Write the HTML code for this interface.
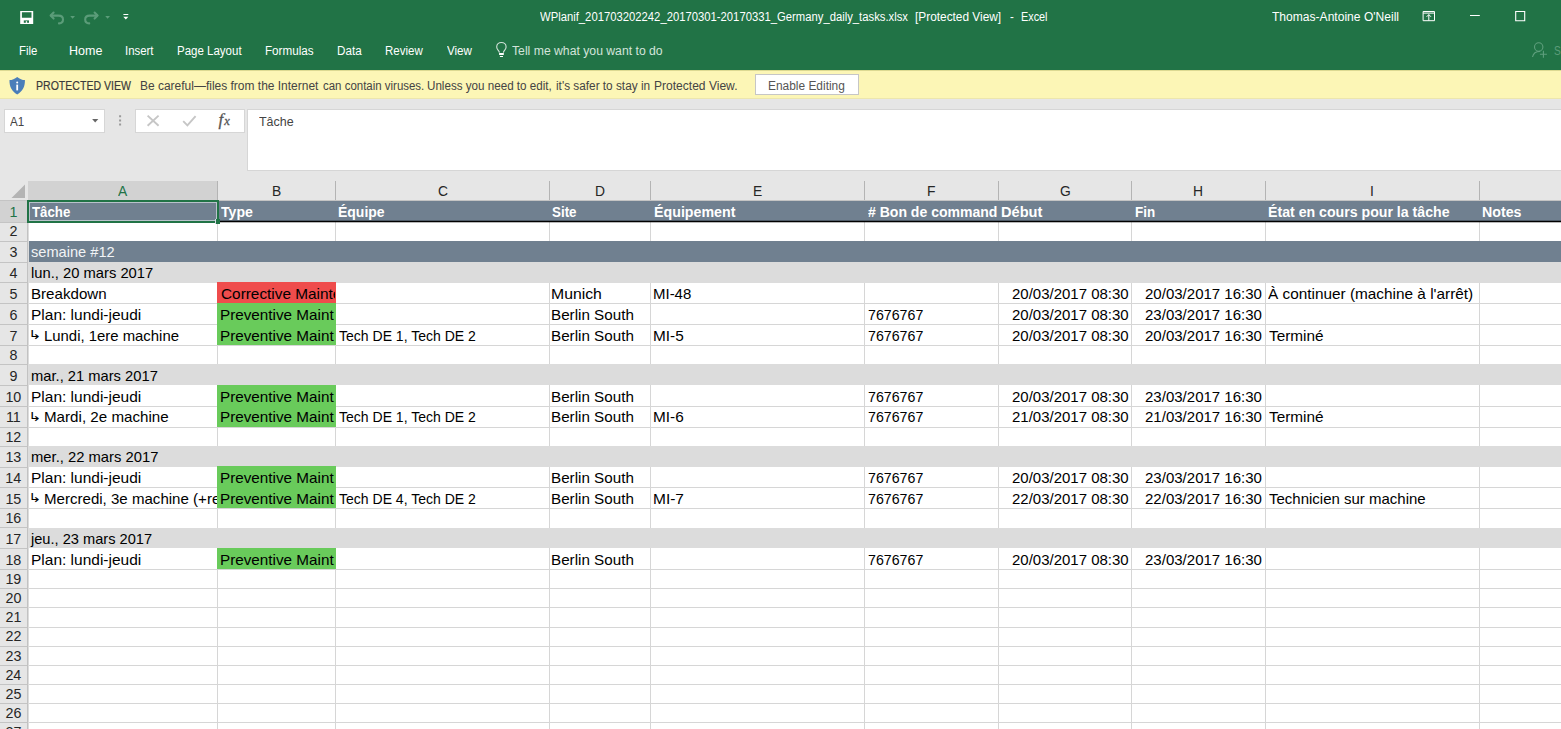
<!DOCTYPE html>
<html lang="fr"><head><meta charset="utf-8"><title>WPlanif - Excel</title>
<style>
html,body{margin:0;padding:0;}
body{width:1561px;height:729px;overflow:hidden;background:#fff;position:relative;font-family:"Liberation Sans",sans-serif;}
#app{position:absolute;left:0;top:0;width:1561px;height:729px;overflow:hidden;}
#app div,#app span,#app svg{position:absolute;}
#app span{white-space:pre;line-height:1;transform-origin:0 0;}
</style></head><body><div id="app">
<div style="left:0.00px;top:0.00px;width:1561.00px;height:70.00px;background:#217346;"></div>
<div style="left:0.00px;top:70.00px;width:1561.00px;height:28.00px;background:#fcf6b6;"></div>
<div style="left:0.00px;top:70.00px;width:1561.00px;height:1.00px;background:#dcd992;"></div>
<div style="left:0.00px;top:98.00px;width:1561.00px;height:1.00px;background:#ece6ae;"></div>
<div style="left:0.00px;top:99.00px;width:1561.00px;height:83.00px;background:#e6e6e6;"></div>
<div style="left:4.00px;top:109.00px;width:101.00px;height:24.00px;background:#fff;border:1px solid #d6d6d6;box-sizing:border-box;"></div>
<div style="left:135.00px;top:109.00px;width:110.00px;height:24.00px;background:#fff;border:1px solid #d6d6d6;box-sizing:border-box;"></div>
<div style="left:247.00px;top:109.00px;width:1320.00px;height:62.00px;background:#fff;border:1px solid #d6d6d6;box-sizing:border-box;"></div>
<div style="left:755.00px;top:74.00px;width:104.00px;height:21.00px;background:#fff;border:1px solid #c6c6c6;box-sizing:border-box;"></div>
<div style="left:0.00px;top:181.20px;width:1561.00px;height:20.00px;background:#e6e6e6;"></div>
<div style="left:27.50px;top:181.20px;width:190.50px;height:19.40px;background:#d2d2d2;"></div>
<div style="left:0.00px;top:201.00px;width:27.50px;height:540.00px;background:#e6e6e6;"></div>
<div style="left:0.00px;top:200.90px;width:27.00px;height:20.84px;background:#d2d2d2;"></div>
<div style="left:27.50px;top:201.00px;width:1533.50px;height:540.00px;background:#fff;"></div>
<div style="left:27.50px;top:200.90px;width:1533.50px;height:20.84px;background:#708090;"></div>
<div style="left:27.50px;top:240.89px;width:1533.50px;height:20.84px;background:#708090;"></div>
<div style="left:27.50px;top:261.73px;width:1533.50px;height:20.84px;background:#dcdcdc;"></div>
<div style="left:27.50px;top:364.24px;width:1533.50px;height:20.84px;background:#dcdcdc;"></div>
<div style="left:27.50px;top:445.91px;width:1533.50px;height:20.84px;background:#dcdcdc;"></div>
<div style="left:27.50px;top:527.58px;width:1533.50px;height:20.84px;background:#dcdcdc;"></div>
<div style="left:0.00px;top:222.00px;width:27.50px;height:1.00px;background:#c4c4c4;"></div>
<div style="left:0.00px;top:241.00px;width:27.50px;height:1.00px;background:#c4c4c4;"></div>
<div style="left:0.00px;top:262.00px;width:27.50px;height:1.00px;background:#c4c4c4;"></div>
<div style="left:0.00px;top:282.00px;width:27.50px;height:1.00px;background:#c4c4c4;"></div>
<div style="left:0.00px;top:303.00px;width:27.50px;height:1.00px;background:#c4c4c4;"></div>
<div style="left:27.50px;top:303.00px;width:1533.50px;height:1.00px;background:#d6d6d6;"></div>
<div style="left:0.00px;top:324.00px;width:27.50px;height:1.00px;background:#c4c4c4;"></div>
<div style="left:27.50px;top:324.00px;width:1533.50px;height:1.00px;background:#d6d6d6;"></div>
<div style="left:0.00px;top:345.00px;width:27.50px;height:1.00px;background:#c4c4c4;"></div>
<div style="left:27.50px;top:345.00px;width:1533.50px;height:1.00px;background:#d6d6d6;"></div>
<div style="left:0.00px;top:364.00px;width:27.50px;height:1.00px;background:#c4c4c4;"></div>
<div style="left:0.00px;top:385.00px;width:27.50px;height:1.00px;background:#c4c4c4;"></div>
<div style="left:0.00px;top:406.00px;width:27.50px;height:1.00px;background:#c4c4c4;"></div>
<div style="left:27.50px;top:406.00px;width:1533.50px;height:1.00px;background:#d6d6d6;"></div>
<div style="left:0.00px;top:427.00px;width:27.50px;height:1.00px;background:#c4c4c4;"></div>
<div style="left:27.50px;top:427.00px;width:1533.50px;height:1.00px;background:#d6d6d6;"></div>
<div style="left:0.00px;top:446.00px;width:27.50px;height:1.00px;background:#c4c4c4;"></div>
<div style="left:0.00px;top:467.00px;width:27.50px;height:1.00px;background:#c4c4c4;"></div>
<div style="left:0.00px;top:487.00px;width:27.50px;height:1.00px;background:#c4c4c4;"></div>
<div style="left:27.50px;top:487.00px;width:1533.50px;height:1.00px;background:#d6d6d6;"></div>
<div style="left:0.00px;top:508.00px;width:27.50px;height:1.00px;background:#c4c4c4;"></div>
<div style="left:27.50px;top:508.00px;width:1533.50px;height:1.00px;background:#d6d6d6;"></div>
<div style="left:0.00px;top:527.00px;width:27.50px;height:1.00px;background:#c4c4c4;"></div>
<div style="left:0.00px;top:548.00px;width:27.50px;height:1.00px;background:#c4c4c4;"></div>
<div style="left:0.00px;top:569.00px;width:27.50px;height:1.00px;background:#c4c4c4;"></div>
<div style="left:27.50px;top:569.00px;width:1533.50px;height:1.00px;background:#d6d6d6;"></div>
<div style="left:0.00px;top:588.00px;width:27.50px;height:1.00px;background:#c4c4c4;"></div>
<div style="left:27.50px;top:588.00px;width:1533.50px;height:1.00px;background:#d6d6d6;"></div>
<div style="left:0.00px;top:607.00px;width:27.50px;height:1.00px;background:#c4c4c4;"></div>
<div style="left:27.50px;top:607.00px;width:1533.50px;height:1.00px;background:#d6d6d6;"></div>
<div style="left:0.00px;top:627.00px;width:27.50px;height:1.00px;background:#c4c4c4;"></div>
<div style="left:27.50px;top:627.00px;width:1533.50px;height:1.00px;background:#d6d6d6;"></div>
<div style="left:0.00px;top:646.00px;width:27.50px;height:1.00px;background:#c4c4c4;"></div>
<div style="left:27.50px;top:646.00px;width:1533.50px;height:1.00px;background:#d6d6d6;"></div>
<div style="left:0.00px;top:665.00px;width:27.50px;height:1.00px;background:#c4c4c4;"></div>
<div style="left:27.50px;top:665.00px;width:1533.50px;height:1.00px;background:#d6d6d6;"></div>
<div style="left:0.00px;top:684.00px;width:27.50px;height:1.00px;background:#c4c4c4;"></div>
<div style="left:27.50px;top:684.00px;width:1533.50px;height:1.00px;background:#d6d6d6;"></div>
<div style="left:0.00px;top:703.00px;width:27.50px;height:1.00px;background:#c4c4c4;"></div>
<div style="left:27.50px;top:703.00px;width:1533.50px;height:1.00px;background:#d6d6d6;"></div>
<div style="left:0.00px;top:722.00px;width:27.50px;height:1.00px;background:#c4c4c4;"></div>
<div style="left:27.50px;top:722.00px;width:1533.50px;height:1.00px;background:#d6d6d6;"></div>
<div style="left:0.00px;top:741.00px;width:27.50px;height:1.00px;background:#c4c4c4;"></div>
<div style="left:27.50px;top:741.00px;width:1533.50px;height:1.00px;background:#d6d6d6;"></div>
<div style="left:217.00px;top:221.74px;width:1.00px;height:19.15px;background:#d6d6d6;"></div>
<div style="left:217.00px;top:282.57px;width:1.00px;height:20.84px;background:#d6d6d6;"></div>
<div style="left:217.00px;top:303.41px;width:1.00px;height:20.84px;background:#d6d6d6;"></div>
<div style="left:217.00px;top:324.25px;width:1.00px;height:20.84px;background:#d6d6d6;"></div>
<div style="left:217.00px;top:345.09px;width:1.00px;height:19.15px;background:#d6d6d6;"></div>
<div style="left:217.00px;top:385.08px;width:1.00px;height:20.84px;background:#d6d6d6;"></div>
<div style="left:217.00px;top:405.92px;width:1.00px;height:20.84px;background:#d6d6d6;"></div>
<div style="left:217.00px;top:426.76px;width:1.00px;height:19.15px;background:#d6d6d6;"></div>
<div style="left:217.00px;top:466.75px;width:1.00px;height:20.84px;background:#d6d6d6;"></div>
<div style="left:217.00px;top:487.59px;width:1.00px;height:20.84px;background:#d6d6d6;"></div>
<div style="left:217.00px;top:508.43px;width:1.00px;height:19.15px;background:#d6d6d6;"></div>
<div style="left:217.00px;top:548.42px;width:1.00px;height:20.84px;background:#d6d6d6;"></div>
<div style="left:217.00px;top:569.26px;width:1.00px;height:19.15px;background:#d6d6d6;"></div>
<div style="left:217.00px;top:588.41px;width:1.00px;height:19.15px;background:#d6d6d6;"></div>
<div style="left:217.00px;top:607.56px;width:1.00px;height:19.15px;background:#d6d6d6;"></div>
<div style="left:217.00px;top:626.71px;width:1.00px;height:19.15px;background:#d6d6d6;"></div>
<div style="left:217.00px;top:645.86px;width:1.00px;height:19.15px;background:#d6d6d6;"></div>
<div style="left:217.00px;top:665.01px;width:1.00px;height:19.15px;background:#d6d6d6;"></div>
<div style="left:217.00px;top:684.16px;width:1.00px;height:19.15px;background:#d6d6d6;"></div>
<div style="left:217.00px;top:703.31px;width:1.00px;height:19.15px;background:#d6d6d6;"></div>
<div style="left:217.00px;top:722.46px;width:1.00px;height:19.15px;background:#d6d6d6;"></div>
<div style="left:335.00px;top:221.74px;width:1.00px;height:19.15px;background:#d6d6d6;"></div>
<div style="left:335.00px;top:282.57px;width:1.00px;height:20.84px;background:#d6d6d6;"></div>
<div style="left:335.00px;top:303.41px;width:1.00px;height:20.84px;background:#d6d6d6;"></div>
<div style="left:335.00px;top:324.25px;width:1.00px;height:20.84px;background:#d6d6d6;"></div>
<div style="left:335.00px;top:345.09px;width:1.00px;height:19.15px;background:#d6d6d6;"></div>
<div style="left:335.00px;top:385.08px;width:1.00px;height:20.84px;background:#d6d6d6;"></div>
<div style="left:335.00px;top:405.92px;width:1.00px;height:20.84px;background:#d6d6d6;"></div>
<div style="left:335.00px;top:426.76px;width:1.00px;height:19.15px;background:#d6d6d6;"></div>
<div style="left:335.00px;top:466.75px;width:1.00px;height:20.84px;background:#d6d6d6;"></div>
<div style="left:335.00px;top:487.59px;width:1.00px;height:20.84px;background:#d6d6d6;"></div>
<div style="left:335.00px;top:508.43px;width:1.00px;height:19.15px;background:#d6d6d6;"></div>
<div style="left:335.00px;top:548.42px;width:1.00px;height:20.84px;background:#d6d6d6;"></div>
<div style="left:335.00px;top:569.26px;width:1.00px;height:19.15px;background:#d6d6d6;"></div>
<div style="left:335.00px;top:588.41px;width:1.00px;height:19.15px;background:#d6d6d6;"></div>
<div style="left:335.00px;top:607.56px;width:1.00px;height:19.15px;background:#d6d6d6;"></div>
<div style="left:335.00px;top:626.71px;width:1.00px;height:19.15px;background:#d6d6d6;"></div>
<div style="left:335.00px;top:645.86px;width:1.00px;height:19.15px;background:#d6d6d6;"></div>
<div style="left:335.00px;top:665.01px;width:1.00px;height:19.15px;background:#d6d6d6;"></div>
<div style="left:335.00px;top:684.16px;width:1.00px;height:19.15px;background:#d6d6d6;"></div>
<div style="left:335.00px;top:703.31px;width:1.00px;height:19.15px;background:#d6d6d6;"></div>
<div style="left:335.00px;top:722.46px;width:1.00px;height:19.15px;background:#d6d6d6;"></div>
<div style="left:549.00px;top:221.74px;width:1.00px;height:19.15px;background:#d6d6d6;"></div>
<div style="left:549.00px;top:282.57px;width:1.00px;height:20.84px;background:#d6d6d6;"></div>
<div style="left:549.00px;top:303.41px;width:1.00px;height:20.84px;background:#d6d6d6;"></div>
<div style="left:549.00px;top:324.25px;width:1.00px;height:20.84px;background:#d6d6d6;"></div>
<div style="left:549.00px;top:345.09px;width:1.00px;height:19.15px;background:#d6d6d6;"></div>
<div style="left:549.00px;top:385.08px;width:1.00px;height:20.84px;background:#d6d6d6;"></div>
<div style="left:549.00px;top:405.92px;width:1.00px;height:20.84px;background:#d6d6d6;"></div>
<div style="left:549.00px;top:426.76px;width:1.00px;height:19.15px;background:#d6d6d6;"></div>
<div style="left:549.00px;top:466.75px;width:1.00px;height:20.84px;background:#d6d6d6;"></div>
<div style="left:549.00px;top:487.59px;width:1.00px;height:20.84px;background:#d6d6d6;"></div>
<div style="left:549.00px;top:508.43px;width:1.00px;height:19.15px;background:#d6d6d6;"></div>
<div style="left:549.00px;top:548.42px;width:1.00px;height:20.84px;background:#d6d6d6;"></div>
<div style="left:549.00px;top:569.26px;width:1.00px;height:19.15px;background:#d6d6d6;"></div>
<div style="left:549.00px;top:588.41px;width:1.00px;height:19.15px;background:#d6d6d6;"></div>
<div style="left:549.00px;top:607.56px;width:1.00px;height:19.15px;background:#d6d6d6;"></div>
<div style="left:549.00px;top:626.71px;width:1.00px;height:19.15px;background:#d6d6d6;"></div>
<div style="left:549.00px;top:645.86px;width:1.00px;height:19.15px;background:#d6d6d6;"></div>
<div style="left:549.00px;top:665.01px;width:1.00px;height:19.15px;background:#d6d6d6;"></div>
<div style="left:549.00px;top:684.16px;width:1.00px;height:19.15px;background:#d6d6d6;"></div>
<div style="left:549.00px;top:703.31px;width:1.00px;height:19.15px;background:#d6d6d6;"></div>
<div style="left:549.00px;top:722.46px;width:1.00px;height:19.15px;background:#d6d6d6;"></div>
<div style="left:650.00px;top:221.74px;width:1.00px;height:19.15px;background:#d6d6d6;"></div>
<div style="left:650.00px;top:282.57px;width:1.00px;height:20.84px;background:#d6d6d6;"></div>
<div style="left:650.00px;top:303.41px;width:1.00px;height:20.84px;background:#d6d6d6;"></div>
<div style="left:650.00px;top:324.25px;width:1.00px;height:20.84px;background:#d6d6d6;"></div>
<div style="left:650.00px;top:345.09px;width:1.00px;height:19.15px;background:#d6d6d6;"></div>
<div style="left:650.00px;top:385.08px;width:1.00px;height:20.84px;background:#d6d6d6;"></div>
<div style="left:650.00px;top:405.92px;width:1.00px;height:20.84px;background:#d6d6d6;"></div>
<div style="left:650.00px;top:426.76px;width:1.00px;height:19.15px;background:#d6d6d6;"></div>
<div style="left:650.00px;top:466.75px;width:1.00px;height:20.84px;background:#d6d6d6;"></div>
<div style="left:650.00px;top:487.59px;width:1.00px;height:20.84px;background:#d6d6d6;"></div>
<div style="left:650.00px;top:508.43px;width:1.00px;height:19.15px;background:#d6d6d6;"></div>
<div style="left:650.00px;top:548.42px;width:1.00px;height:20.84px;background:#d6d6d6;"></div>
<div style="left:650.00px;top:569.26px;width:1.00px;height:19.15px;background:#d6d6d6;"></div>
<div style="left:650.00px;top:588.41px;width:1.00px;height:19.15px;background:#d6d6d6;"></div>
<div style="left:650.00px;top:607.56px;width:1.00px;height:19.15px;background:#d6d6d6;"></div>
<div style="left:650.00px;top:626.71px;width:1.00px;height:19.15px;background:#d6d6d6;"></div>
<div style="left:650.00px;top:645.86px;width:1.00px;height:19.15px;background:#d6d6d6;"></div>
<div style="left:650.00px;top:665.01px;width:1.00px;height:19.15px;background:#d6d6d6;"></div>
<div style="left:650.00px;top:684.16px;width:1.00px;height:19.15px;background:#d6d6d6;"></div>
<div style="left:650.00px;top:703.31px;width:1.00px;height:19.15px;background:#d6d6d6;"></div>
<div style="left:650.00px;top:722.46px;width:1.00px;height:19.15px;background:#d6d6d6;"></div>
<div style="left:864.00px;top:221.74px;width:1.00px;height:19.15px;background:#d6d6d6;"></div>
<div style="left:864.00px;top:282.57px;width:1.00px;height:20.84px;background:#d6d6d6;"></div>
<div style="left:864.00px;top:303.41px;width:1.00px;height:20.84px;background:#d6d6d6;"></div>
<div style="left:864.00px;top:324.25px;width:1.00px;height:20.84px;background:#d6d6d6;"></div>
<div style="left:864.00px;top:345.09px;width:1.00px;height:19.15px;background:#d6d6d6;"></div>
<div style="left:864.00px;top:385.08px;width:1.00px;height:20.84px;background:#d6d6d6;"></div>
<div style="left:864.00px;top:405.92px;width:1.00px;height:20.84px;background:#d6d6d6;"></div>
<div style="left:864.00px;top:426.76px;width:1.00px;height:19.15px;background:#d6d6d6;"></div>
<div style="left:864.00px;top:466.75px;width:1.00px;height:20.84px;background:#d6d6d6;"></div>
<div style="left:864.00px;top:487.59px;width:1.00px;height:20.84px;background:#d6d6d6;"></div>
<div style="left:864.00px;top:508.43px;width:1.00px;height:19.15px;background:#d6d6d6;"></div>
<div style="left:864.00px;top:548.42px;width:1.00px;height:20.84px;background:#d6d6d6;"></div>
<div style="left:864.00px;top:569.26px;width:1.00px;height:19.15px;background:#d6d6d6;"></div>
<div style="left:864.00px;top:588.41px;width:1.00px;height:19.15px;background:#d6d6d6;"></div>
<div style="left:864.00px;top:607.56px;width:1.00px;height:19.15px;background:#d6d6d6;"></div>
<div style="left:864.00px;top:626.71px;width:1.00px;height:19.15px;background:#d6d6d6;"></div>
<div style="left:864.00px;top:645.86px;width:1.00px;height:19.15px;background:#d6d6d6;"></div>
<div style="left:864.00px;top:665.01px;width:1.00px;height:19.15px;background:#d6d6d6;"></div>
<div style="left:864.00px;top:684.16px;width:1.00px;height:19.15px;background:#d6d6d6;"></div>
<div style="left:864.00px;top:703.31px;width:1.00px;height:19.15px;background:#d6d6d6;"></div>
<div style="left:864.00px;top:722.46px;width:1.00px;height:19.15px;background:#d6d6d6;"></div>
<div style="left:998.00px;top:221.74px;width:1.00px;height:19.15px;background:#d6d6d6;"></div>
<div style="left:998.00px;top:282.57px;width:1.00px;height:20.84px;background:#d6d6d6;"></div>
<div style="left:998.00px;top:303.41px;width:1.00px;height:20.84px;background:#d6d6d6;"></div>
<div style="left:998.00px;top:324.25px;width:1.00px;height:20.84px;background:#d6d6d6;"></div>
<div style="left:998.00px;top:345.09px;width:1.00px;height:19.15px;background:#d6d6d6;"></div>
<div style="left:998.00px;top:385.08px;width:1.00px;height:20.84px;background:#d6d6d6;"></div>
<div style="left:998.00px;top:405.92px;width:1.00px;height:20.84px;background:#d6d6d6;"></div>
<div style="left:998.00px;top:426.76px;width:1.00px;height:19.15px;background:#d6d6d6;"></div>
<div style="left:998.00px;top:466.75px;width:1.00px;height:20.84px;background:#d6d6d6;"></div>
<div style="left:998.00px;top:487.59px;width:1.00px;height:20.84px;background:#d6d6d6;"></div>
<div style="left:998.00px;top:508.43px;width:1.00px;height:19.15px;background:#d6d6d6;"></div>
<div style="left:998.00px;top:548.42px;width:1.00px;height:20.84px;background:#d6d6d6;"></div>
<div style="left:998.00px;top:569.26px;width:1.00px;height:19.15px;background:#d6d6d6;"></div>
<div style="left:998.00px;top:588.41px;width:1.00px;height:19.15px;background:#d6d6d6;"></div>
<div style="left:998.00px;top:607.56px;width:1.00px;height:19.15px;background:#d6d6d6;"></div>
<div style="left:998.00px;top:626.71px;width:1.00px;height:19.15px;background:#d6d6d6;"></div>
<div style="left:998.00px;top:645.86px;width:1.00px;height:19.15px;background:#d6d6d6;"></div>
<div style="left:998.00px;top:665.01px;width:1.00px;height:19.15px;background:#d6d6d6;"></div>
<div style="left:998.00px;top:684.16px;width:1.00px;height:19.15px;background:#d6d6d6;"></div>
<div style="left:998.00px;top:703.31px;width:1.00px;height:19.15px;background:#d6d6d6;"></div>
<div style="left:998.00px;top:722.46px;width:1.00px;height:19.15px;background:#d6d6d6;"></div>
<div style="left:1131.00px;top:221.74px;width:1.00px;height:19.15px;background:#d6d6d6;"></div>
<div style="left:1131.00px;top:282.57px;width:1.00px;height:20.84px;background:#d6d6d6;"></div>
<div style="left:1131.00px;top:303.41px;width:1.00px;height:20.84px;background:#d6d6d6;"></div>
<div style="left:1131.00px;top:324.25px;width:1.00px;height:20.84px;background:#d6d6d6;"></div>
<div style="left:1131.00px;top:345.09px;width:1.00px;height:19.15px;background:#d6d6d6;"></div>
<div style="left:1131.00px;top:385.08px;width:1.00px;height:20.84px;background:#d6d6d6;"></div>
<div style="left:1131.00px;top:405.92px;width:1.00px;height:20.84px;background:#d6d6d6;"></div>
<div style="left:1131.00px;top:426.76px;width:1.00px;height:19.15px;background:#d6d6d6;"></div>
<div style="left:1131.00px;top:466.75px;width:1.00px;height:20.84px;background:#d6d6d6;"></div>
<div style="left:1131.00px;top:487.59px;width:1.00px;height:20.84px;background:#d6d6d6;"></div>
<div style="left:1131.00px;top:508.43px;width:1.00px;height:19.15px;background:#d6d6d6;"></div>
<div style="left:1131.00px;top:548.42px;width:1.00px;height:20.84px;background:#d6d6d6;"></div>
<div style="left:1131.00px;top:569.26px;width:1.00px;height:19.15px;background:#d6d6d6;"></div>
<div style="left:1131.00px;top:588.41px;width:1.00px;height:19.15px;background:#d6d6d6;"></div>
<div style="left:1131.00px;top:607.56px;width:1.00px;height:19.15px;background:#d6d6d6;"></div>
<div style="left:1131.00px;top:626.71px;width:1.00px;height:19.15px;background:#d6d6d6;"></div>
<div style="left:1131.00px;top:645.86px;width:1.00px;height:19.15px;background:#d6d6d6;"></div>
<div style="left:1131.00px;top:665.01px;width:1.00px;height:19.15px;background:#d6d6d6;"></div>
<div style="left:1131.00px;top:684.16px;width:1.00px;height:19.15px;background:#d6d6d6;"></div>
<div style="left:1131.00px;top:703.31px;width:1.00px;height:19.15px;background:#d6d6d6;"></div>
<div style="left:1131.00px;top:722.46px;width:1.00px;height:19.15px;background:#d6d6d6;"></div>
<div style="left:1265.00px;top:221.74px;width:1.00px;height:19.15px;background:#d6d6d6;"></div>
<div style="left:1265.00px;top:282.57px;width:1.00px;height:20.84px;background:#d6d6d6;"></div>
<div style="left:1265.00px;top:303.41px;width:1.00px;height:20.84px;background:#d6d6d6;"></div>
<div style="left:1265.00px;top:324.25px;width:1.00px;height:20.84px;background:#d6d6d6;"></div>
<div style="left:1265.00px;top:345.09px;width:1.00px;height:19.15px;background:#d6d6d6;"></div>
<div style="left:1265.00px;top:385.08px;width:1.00px;height:20.84px;background:#d6d6d6;"></div>
<div style="left:1265.00px;top:405.92px;width:1.00px;height:20.84px;background:#d6d6d6;"></div>
<div style="left:1265.00px;top:426.76px;width:1.00px;height:19.15px;background:#d6d6d6;"></div>
<div style="left:1265.00px;top:466.75px;width:1.00px;height:20.84px;background:#d6d6d6;"></div>
<div style="left:1265.00px;top:487.59px;width:1.00px;height:20.84px;background:#d6d6d6;"></div>
<div style="left:1265.00px;top:508.43px;width:1.00px;height:19.15px;background:#d6d6d6;"></div>
<div style="left:1265.00px;top:548.42px;width:1.00px;height:20.84px;background:#d6d6d6;"></div>
<div style="left:1265.00px;top:569.26px;width:1.00px;height:19.15px;background:#d6d6d6;"></div>
<div style="left:1265.00px;top:588.41px;width:1.00px;height:19.15px;background:#d6d6d6;"></div>
<div style="left:1265.00px;top:607.56px;width:1.00px;height:19.15px;background:#d6d6d6;"></div>
<div style="left:1265.00px;top:626.71px;width:1.00px;height:19.15px;background:#d6d6d6;"></div>
<div style="left:1265.00px;top:645.86px;width:1.00px;height:19.15px;background:#d6d6d6;"></div>
<div style="left:1265.00px;top:665.01px;width:1.00px;height:19.15px;background:#d6d6d6;"></div>
<div style="left:1265.00px;top:684.16px;width:1.00px;height:19.15px;background:#d6d6d6;"></div>
<div style="left:1265.00px;top:703.31px;width:1.00px;height:19.15px;background:#d6d6d6;"></div>
<div style="left:1265.00px;top:722.46px;width:1.00px;height:19.15px;background:#d6d6d6;"></div>
<div style="left:1479.00px;top:221.74px;width:1.00px;height:19.15px;background:#d6d6d6;"></div>
<div style="left:1479.00px;top:282.57px;width:1.00px;height:20.84px;background:#d6d6d6;"></div>
<div style="left:1479.00px;top:303.41px;width:1.00px;height:20.84px;background:#d6d6d6;"></div>
<div style="left:1479.00px;top:324.25px;width:1.00px;height:20.84px;background:#d6d6d6;"></div>
<div style="left:1479.00px;top:345.09px;width:1.00px;height:19.15px;background:#d6d6d6;"></div>
<div style="left:1479.00px;top:385.08px;width:1.00px;height:20.84px;background:#d6d6d6;"></div>
<div style="left:1479.00px;top:405.92px;width:1.00px;height:20.84px;background:#d6d6d6;"></div>
<div style="left:1479.00px;top:426.76px;width:1.00px;height:19.15px;background:#d6d6d6;"></div>
<div style="left:1479.00px;top:466.75px;width:1.00px;height:20.84px;background:#d6d6d6;"></div>
<div style="left:1479.00px;top:487.59px;width:1.00px;height:20.84px;background:#d6d6d6;"></div>
<div style="left:1479.00px;top:508.43px;width:1.00px;height:19.15px;background:#d6d6d6;"></div>
<div style="left:1479.00px;top:548.42px;width:1.00px;height:20.84px;background:#d6d6d6;"></div>
<div style="left:1479.00px;top:569.26px;width:1.00px;height:19.15px;background:#d6d6d6;"></div>
<div style="left:1479.00px;top:588.41px;width:1.00px;height:19.15px;background:#d6d6d6;"></div>
<div style="left:1479.00px;top:607.56px;width:1.00px;height:19.15px;background:#d6d6d6;"></div>
<div style="left:1479.00px;top:626.71px;width:1.00px;height:19.15px;background:#d6d6d6;"></div>
<div style="left:1479.00px;top:645.86px;width:1.00px;height:19.15px;background:#d6d6d6;"></div>
<div style="left:1479.00px;top:665.01px;width:1.00px;height:19.15px;background:#d6d6d6;"></div>
<div style="left:1479.00px;top:684.16px;width:1.00px;height:19.15px;background:#d6d6d6;"></div>
<div style="left:1479.00px;top:703.31px;width:1.00px;height:19.15px;background:#d6d6d6;"></div>
<div style="left:1479.00px;top:722.46px;width:1.00px;height:19.15px;background:#d6d6d6;"></div>
<div style="left:217.00px;top:282.27px;width:119.00px;height:21.14px;background:#ef4c4c;"></div>
<div style="left:217.00px;top:303.11px;width:119.00px;height:21.14px;background:#69cb5b;"></div>
<div style="left:217.00px;top:323.95px;width:119.00px;height:21.14px;background:#69cb5b;"></div>
<div style="left:217.00px;top:384.78px;width:119.00px;height:21.14px;background:#69cb5b;"></div>
<div style="left:217.00px;top:405.62px;width:119.00px;height:21.14px;background:#69cb5b;"></div>
<div style="left:217.00px;top:466.45px;width:119.00px;height:21.14px;background:#69cb5b;"></div>
<div style="left:217.00px;top:487.29px;width:119.00px;height:21.14px;background:#69cb5b;"></div>
<div style="left:217.00px;top:548.12px;width:119.00px;height:21.14px;background:#69cb5b;"></div>
<div style="left:218.00px;top:220.00px;width:1343.00px;height:3.00px;background:rgba(0,0,0,.28);"></div>
<div style="left:218.00px;top:221.00px;width:1343.00px;height:1.00px;background:#000;"></div>
<div style="left:217.00px;top:181.20px;width:1.00px;height:20.00px;background:#b4b4b4;"></div>
<div style="left:335.00px;top:181.20px;width:1.00px;height:20.00px;background:#b4b4b4;"></div>
<div style="left:549.00px;top:181.20px;width:1.00px;height:20.00px;background:#b4b4b4;"></div>
<div style="left:650.00px;top:181.20px;width:1.00px;height:20.00px;background:#b4b4b4;"></div>
<div style="left:864.00px;top:181.20px;width:1.00px;height:20.00px;background:#b4b4b4;"></div>
<div style="left:998.00px;top:181.20px;width:1.00px;height:20.00px;background:#b4b4b4;"></div>
<div style="left:1131.00px;top:181.20px;width:1.00px;height:20.00px;background:#b4b4b4;"></div>
<div style="left:1265.00px;top:181.20px;width:1.00px;height:20.00px;background:#b4b4b4;"></div>
<div style="left:1479.00px;top:181.20px;width:1.00px;height:20.00px;background:#b4b4b4;"></div>
<div style="left:0.00px;top:200.40px;width:1561.00px;height:0.90px;background:#c4c4c4;"></div>
<div style="left:27.00px;top:201.00px;width:1.00px;height:540.00px;background:#c2c2c2;"></div>
<div style="left:28.00px;top:201.00px;width:1.00px;height:540.00px;background:#dcdcdc;"></div>
<svg style="left:11px;top:184px" width="15" height="15" viewBox="0 0 15 15"><path d="M14 0.5V14H0.5Z" fill="#b4b4b4"/></svg>
<div style="left:26.90px;top:200.00px;width:192.10px;height:23.00px;background:transparent;border:2px solid #217346;box-sizing:border-box;box-shadow:inset 0 0 0 1px #b9c2cb;"></div>
<div style="left:215.00px;top:218.60px;width:5.00px;height:5.40px;background:#d5dce3;"></div>
<div style="left:215.60px;top:219.30px;width:4.40px;height:4.70px;background:#217346;"></div>
<div style="left:27.50px;top:199.60px;width:190.50px;height:1.60px;background:#217346;"></div>
<svg style="left:19px;top:10px" width="16" height="16" viewBox="19 10 16 16"><path d="M20.2 11.1h13v12.9h-13z M21.9 12.2v5.5h9.6v-5.5z" fill="#fff" fill-rule="evenodd"/><path d="M23.8 20.4h5.2v2.4h-5.2z" fill="#217346"/><path d="M25.8 21.2h1.3v1.7h-1.3z" fill="#fff"/></svg>
<svg style="left:48px;top:10px" width="66" height="16" viewBox="48 10 66 16"><g fill="none" stroke="#5b9c79" stroke-width="2.1" stroke-linecap="round" stroke-linejoin="round"><path d="M53.6 12.6L50.6 15.6L53.6 18.6"/><path d="M51 15.6H58.5C61.3 15.6 63 17.3 63 19.4C63 21.6 61.3 23.2 59 23.4"/><path d="M94.6 12.6L97.6 15.6L94.6 18.6"/><path d="M97.2 15.6H89.7C86.9 15.6 85.2 17.3 85.2 19.4C85.2 21.6 86.9 23.2 89.2 23.4"/></g><path d="M70.2 16.1h4.8l-2.4 2.7z M105.2 16.1h4.8l-2.4 2.7z" fill="#5b9c79"/></svg>
<svg style="left:122px;top:12px" width="8" height="9" viewBox="122 12 8 9"><path d="M123.4 14h4.9v1h-4.9z M123.3 16.8h5l-2.5 2.6z" fill="#fff"/></svg>
<svg style="left:1420px;top:9px" width="18" height="14" viewBox="1420 9 18 14"><g fill="none" stroke="#fff" stroke-width="1"><path d="M1423.1 11.5h11.4v9.2h-11.4z M1423.1 13.1h11.4 M1428.8 14.6v6"/><path d="M1426.6 16.8l2.2-2.2l2.2 2.2"/></g></svg>
<svg style="left:1468px;top:13px" width="14" height="5" viewBox="1468 13 14 5"><path d="M1470 15.5h9.8" stroke="#fff" stroke-width="1" fill="none"/></svg>
<svg style="left:1513px;top:9px" width="15" height="14" viewBox="1513 9 15 14"><path d="M1515.7 11.5h9v9.2h-9z" stroke="#fff" stroke-width="1.1" fill="none"/></svg>
<svg style="left:1528px;top:40px" width="22" height="20" viewBox="1528 40 22 20"><g fill="none" stroke="#5f9f7d" stroke-width="1.1"><circle cx="1538.7" cy="47" r="4.2"/><path d="M1532.5 57C1533.3 53.2 1536 51.3 1540.3 51.4"/><path d="M1539.9 54.2h7 M1543.4 50.8v7"/></g></svg>
<svg style="left:494px;top:40px" width="16" height="19" viewBox="494 40 16 19"><path d="M499.4 52.6C499.2 50.8 496.7 49.6 496.7 46.9C496.7 44.4 498.8 42.5 501.4 42.5C504 42.5 506.1 44.4 506.1 46.9C506.1 49.6 503.6 50.8 503.4 52.6" fill="none" stroke="#d3e3da" stroke-width="1.1"/><path d="M499.1 53.1h4.7v1.9h-4.7z M499.9 55.9h3.1v1h-3.1z" fill="#fff"/></svg>
<svg style="left:8px;top:75px" width="19" height="21" viewBox="8 75 19 21"><path d="M17.2 76.9C19.6 78.9 22.3 79.9 24.9 80.1C25.2 86.6 22.5 91.6 17.2 94.5C11.9 91.6 9.2 86.6 9.5 80.1C12.1 79.9 14.8 78.9 17.2 76.9Z" fill="#4a7eb9"/><path d="M16.3 84.6h1.8v5.8h-1.8z" fill="#fff"/><circle cx="17.2" cy="82.5" r="1" fill="#fff"/></svg>
<svg style="left:90px;top:117px" width="10" height="7" viewBox="90 117 10 7"><path d="M92.1 119h6.2l-3.1 3.4z" fill="#666"/></svg>
<svg style="left:118px;top:114px" width="5" height="13" viewBox="118 114 5 13"><path d="M119.1 115.3h2v2h-2z M119.1 119.4h2v2h-2z M119.1 123.5h2v2h-2z" fill="#9a9a9a"/></svg>
<svg style="left:145px;top:113px" width="54" height="15" viewBox="145 113 54 15"><g fill="none" stroke="#c6c6c6" stroke-width="1.9"><path d="M147.6 115.6L158.6 125.8 M158.6 115.6L147.6 125.8"/><path d="M183.2 121.2L187.4 125.4L195.6 116.2"/></g></svg>
<span style="left:218.6px;top:111.2px;font-family:'Liberation Serif',serif;font-style:italic;font-size:17px;color:#555;-webkit-text-stroke:0.3px #555;">f</span><span style="left:224.2px;top:115.4px;font-family:'Liberation Serif',serif;font-style:italic;font-size:12.5px;color:#555;-webkit-text-stroke:0.3px #555;">x</span>

<span style="left:539.55px;top:10.59px;font-size:12.3px;color:#fff;transform:scaleX(0.9170);">WPlanif_201703202242_20170301-20170331_Germany_daily_tasks.xlsx</span>
<span style="left:914.83px;top:10.59px;font-size:12.3px;color:#fff;transform:scaleX(0.9641);">[Protected View]</span>
<span style="left:1009.88px;top:10.59px;font-size:12.3px;color:#fff;transform:scaleX(0.9333);">-</span>
<span style="left:1020.57px;top:10.59px;font-size:12.3px;color:#fff;transform:scaleX(0.8814);">Excel</span>
<span style="left:1271.60px;top:10.59px;font-size:12.3px;color:#fff;transform:scaleX(0.9813);">Thomas-Antoine O'Neill</span>
<span style="left:18.92px;top:44.99px;font-size:12.3px;color:#fff;transform:scaleX(0.9260);">File</span>
<span style="left:68.83px;top:44.99px;font-size:12.3px;color:#fff;transform:scaleX(1.0176);">Home</span>
<span style="left:124.82px;top:44.99px;font-size:12.3px;color:#fff;transform:scaleX(0.9277);">Insert</span>
<span style="left:176.91px;top:44.99px;font-size:12.3px;color:#fff;transform:scaleX(0.9353);">Page Layout</span>
<span style="left:264.70px;top:44.99px;font-size:12.3px;color:#fff;transform:scaleX(0.9467);">Formulas</span>
<span style="left:336.70px;top:44.99px;font-size:12.3px;color:#fff;transform:scaleX(0.9480);">Data</span>
<span style="left:385.01px;top:44.99px;font-size:12.3px;color:#fff;transform:scaleX(0.9350);">Review</span>
<span style="left:446.65px;top:44.99px;font-size:12.3px;color:#fff;transform:scaleX(0.9434);">View</span>
<span style="left:512.40px;top:44.99px;font-size:12.3px;color:#d3e3da;transform:scaleX(0.9927);">Tell me what you want to do</span>
<span style="left:1553.94px;top:44.99px;font-size:12.3px;color:#5d9c7a;transform:scaleX(0.8276);">S</span>
<span style="left:35.89px;top:79.99px;font-size:12.3px;color:#3b3b3b;transform:scaleX(0.8575);-webkit-text-stroke:0.2px #3b3b3b;">PROTECTED VIEW</span>
<span style="left:139.63px;top:79.99px;font-size:12.3px;color:#444;transform:scaleX(0.9739);">Be careful—files from the Internet</span>
<span style="left:322.58px;top:79.99px;font-size:12.3px;color:#444;transform:scaleX(0.9318);">can contain viruses.</span>
<span style="left:427.20px;top:79.99px;font-size:12.3px;color:#444;transform:scaleX(0.9457);">Unless you need to edit,</span>
<span style="left:555.93px;top:79.99px;font-size:12.3px;color:#444;transform:scaleX(0.9596);">it's safer to stay in</span>
<span style="left:654.07px;top:79.99px;font-size:12.3px;color:#444;transform:scaleX(0.9795);">Protected View.</span>
<span style="left:767.78px;top:79.99px;font-size:12.3px;color:#555;transform:scaleX(0.9690);">Enable Editing</span>
<span style="left:9.55px;top:115.99px;font-size:12.3px;color:#444;transform:scaleX(0.9448);">A1</span>
<span style="left:258.70px;top:115.99px;font-size:12.3px;color:#444;transform:scaleX(1.0135);">Tâche</span>
<span style="left:118.22px;top:184.49px;font-size:14.9px;color:#217346;transform:scaleX(0.9300);">A</span>
<span style="left:271.87px;top:184.49px;font-size:14.9px;color:#262626;transform:scaleX(0.9300);">B</span>
<span style="left:437.50px;top:184.49px;font-size:14.9px;color:#262626;transform:scaleX(0.9300);">C</span>
<span style="left:594.77px;top:184.49px;font-size:14.9px;color:#262626;transform:scaleX(0.9300);">D</span>
<span style="left:752.62px;top:184.49px;font-size:14.9px;color:#262626;transform:scaleX(0.9300);">E</span>
<span style="left:926.72px;top:184.49px;font-size:14.9px;color:#262626;transform:scaleX(0.9300);">F</span>
<span style="left:1059.52px;top:184.49px;font-size:14.9px;color:#262626;transform:scaleX(0.9300);">G</span>
<span style="left:1193.40px;top:184.49px;font-size:14.9px;color:#262626;transform:scaleX(0.9300);">H</span>
<span style="left:1370.39px;top:184.49px;font-size:14.9px;color:#262626;transform:scaleX(0.9300);">I</span>
<span style="left:9.38px;top:205.34px;font-size:14.3px;color:#217346;transform:scaleX(1.0000);">1</span>
<span style="left:9.50px;top:224.49px;font-size:14.3px;color:#262626;transform:scaleX(1.0000);">2</span>
<span style="left:9.62px;top:245.33px;font-size:14.3px;color:#262626;transform:scaleX(1.0000);">3</span>
<span style="left:9.62px;top:266.17px;font-size:14.3px;color:#262626;transform:scaleX(1.0000);">4</span>
<span style="left:9.62px;top:287.01px;font-size:14.3px;color:#262626;transform:scaleX(1.0000);">5</span>
<span style="left:9.50px;top:307.85px;font-size:14.3px;color:#262626;transform:scaleX(1.0000);">6</span>
<span style="left:9.50px;top:328.69px;font-size:14.3px;color:#262626;transform:scaleX(1.0000);">7</span>
<span style="left:9.62px;top:347.84px;font-size:14.3px;color:#262626;transform:scaleX(1.0000);">8</span>
<span style="left:9.50px;top:368.68px;font-size:14.3px;color:#262626;transform:scaleX(1.0000);">9</span>
<span style="left:5.38px;top:389.52px;font-size:14.3px;color:#262626;transform:scaleX(1.0000);">10</span>
<span style="left:5.88px;top:410.36px;font-size:14.3px;color:#262626;transform:scaleX(1.0000);">11</span>
<span style="left:5.38px;top:429.51px;font-size:14.3px;color:#262626;transform:scaleX(1.0000);">12</span>
<span style="left:5.38px;top:450.35px;font-size:14.3px;color:#262626;transform:scaleX(1.0000);">13</span>
<span style="left:5.25px;top:471.19px;font-size:14.3px;color:#262626;transform:scaleX(1.0000);">14</span>
<span style="left:5.38px;top:492.03px;font-size:14.3px;color:#262626;transform:scaleX(1.0000);">15</span>
<span style="left:5.38px;top:511.18px;font-size:14.3px;color:#262626;transform:scaleX(1.0000);">16</span>
<span style="left:5.38px;top:532.02px;font-size:14.3px;color:#262626;transform:scaleX(1.0000);">17</span>
<span style="left:5.38px;top:552.86px;font-size:14.3px;color:#262626;transform:scaleX(1.0000);">18</span>
<span style="left:5.38px;top:572.01px;font-size:14.3px;color:#262626;transform:scaleX(1.0000);">19</span>
<span style="left:5.50px;top:591.16px;font-size:14.3px;color:#262626;transform:scaleX(1.0000);">20</span>
<span style="left:5.50px;top:610.31px;font-size:14.3px;color:#262626;transform:scaleX(1.0000);">21</span>
<span style="left:5.50px;top:629.46px;font-size:14.3px;color:#262626;transform:scaleX(1.0000);">22</span>
<span style="left:5.50px;top:648.61px;font-size:14.3px;color:#262626;transform:scaleX(1.0000);">23</span>
<span style="left:5.38px;top:667.76px;font-size:14.3px;color:#262626;transform:scaleX(1.0000);">24</span>
<span style="left:5.50px;top:686.91px;font-size:14.3px;color:#262626;transform:scaleX(1.0000);">25</span>
<span style="left:5.50px;top:706.06px;font-size:14.3px;color:#262626;transform:scaleX(1.0000);">26</span>
<span style="left:5.50px;top:725.21px;font-size:14.3px;color:#262626;transform:scaleX(1.0000);">27</span>
<span style="left:31.62px;top:204.94px;font-size:14.3px;color:#fff;transform:scaleX(0.9284);font-weight:bold;">Tâche</span>
<span style="left:220.80px;top:204.94px;font-size:14.3px;color:#fff;transform:scaleX(0.9873);font-weight:bold;">Type</span>
<span style="left:337.97px;top:204.94px;font-size:14.3px;color:#fff;transform:scaleX(0.9773);font-weight:bold;">Équipe</span>
<span style="left:552.08px;top:204.94px;font-size:14.3px;color:#fff;transform:scaleX(0.9347);font-weight:bold;">Site</span>
<span style="left:653.55px;top:204.94px;font-size:14.3px;color:#fff;transform:scaleX(0.9957);font-weight:bold;">Équipement</span>
<div style="left:867.70px;top:202.94px;width:129.90px;height:20.3px;overflow:hidden;"><span style="left:0;top:2px;font-size:14.3px;color:#fff;transform:scaleX(0.9813);font-weight:bold;"># Bon de command</span></div>
<span style="left:1000.73px;top:204.94px;font-size:14.3px;color:#fff;transform:scaleX(1.0217);font-weight:bold;">Début</span>
<span style="left:1134.61px;top:204.94px;font-size:14.3px;color:#fff;transform:scaleX(0.9385);font-weight:bold;">Fin</span>
<span style="left:1267.96px;top:204.94px;font-size:14.3px;color:#fff;transform:scaleX(0.9890);font-weight:bold;">État en cours pour la tâche</span>
<span style="left:1481.96px;top:204.94px;font-size:14.3px;color:#fff;transform:scaleX(0.9921);font-weight:bold;">Notes</span>
<span style="left:31.34px;top:245.43px;font-size:14.3px;color:#f2f4f6;transform:scaleX(1.0217);">semaine #12</span>
<span style="left:30.82px;top:266.27px;font-size:14.3px;color:#000;transform:scaleX(1.0321);">lun., 20 mars 2017</span>
<span style="left:30.82px;top:368.78px;font-size:14.3px;color:#000;transform:scaleX(1.0296);">mar., 21 mars 2017</span>
<span style="left:30.82px;top:450.45px;font-size:14.3px;color:#000;transform:scaleX(1.0346);">mer., 22 mars 2017</span>
<span style="left:31.31px;top:532.12px;font-size:14.3px;color:#000;transform:scaleX(1.0220);">jeu., 23 mars 2017</span>
<span style="left:30.53px;top:287.11px;font-size:14.3px;color:#000;transform:scaleX(1.0570);">Breakdown</span>
<span style="left:30.50px;top:307.95px;font-size:14.3px;color:#000;transform:scaleX(1.0834);">Plan: lundi-jeudi</span>
<span style="left:30.50px;top:389.62px;font-size:14.3px;color:#000;transform:scaleX(1.0834);">Plan: lundi-jeudi</span>
<span style="left:30.50px;top:471.29px;font-size:14.3px;color:#000;transform:scaleX(1.0834);">Plan: lundi-jeudi</span>
<span style="left:30.50px;top:552.96px;font-size:14.3px;color:#000;transform:scaleX(1.0834);">Plan: lundi-jeudi</span>
<span style="left:28.18px;top:328.88px;font-size:12.3px;color:#000;transform:scaleX(1.2696);font-family:'DejaVu Sans',sans-serif;">↳</span>
<span style="left:28.18px;top:410.55px;font-size:12.3px;color:#000;transform:scaleX(1.2696);font-family:'DejaVu Sans',sans-serif;">↳</span>
<span style="left:28.18px;top:492.22px;font-size:12.3px;color:#000;transform:scaleX(1.2696);font-family:'DejaVu Sans',sans-serif;">↳</span>
<span style="left:43.65px;top:328.79px;font-size:14.3px;color:#000;transform:scaleX(1.0419);">Lundi, 1ere machine</span>
<span style="left:43.62px;top:410.46px;font-size:14.3px;color:#000;transform:scaleX(1.0600);">Mardi, 2e machine</span>
<div style="left:43.63px;top:490.13px;width:173.57px;height:20.3px;overflow:hidden;"><span style="left:0;top:2px;font-size:14.3px;color:#000;transform:scaleX(1.0539);">Mercredi, 3e machine (+re</span></div>
<div style="left:220.74px;top:285.11px;width:114.36px;height:20.3px;overflow:hidden;"><span style="left:0;top:2px;font-size:14.3px;color:#000;transform:scaleX(1.0741);">Corrective Mainte</span></div>
<span style="left:220.22px;top:307.95px;font-size:14.3px;color:#000;transform:scaleX(1.0670);">Preventive Maint</span>
<span style="left:220.22px;top:328.79px;font-size:14.3px;color:#000;transform:scaleX(1.0670);">Preventive Maint</span>
<span style="left:220.22px;top:389.62px;font-size:14.3px;color:#000;transform:scaleX(1.0670);">Preventive Maint</span>
<span style="left:220.22px;top:410.46px;font-size:14.3px;color:#000;transform:scaleX(1.0670);">Preventive Maint</span>
<span style="left:220.22px;top:471.29px;font-size:14.3px;color:#000;transform:scaleX(1.0670);">Preventive Maint</span>
<span style="left:220.22px;top:492.13px;font-size:14.3px;color:#000;transform:scaleX(1.0670);">Preventive Maint</span>
<span style="left:220.22px;top:552.96px;font-size:14.3px;color:#000;transform:scaleX(1.0670);">Preventive Maint</span>
<span style="left:339.10px;top:328.79px;font-size:14.3px;color:#000;transform:scaleX(0.9805);">Tech DE 1, Tech DE 2</span>
<span style="left:339.10px;top:410.46px;font-size:14.3px;color:#000;transform:scaleX(0.9805);">Tech DE 1, Tech DE 2</span>
<span style="left:339.10px;top:492.13px;font-size:14.3px;color:#000;transform:scaleX(0.9805);">Tech DE 4, Tech DE 2</span>
<span style="left:551.37px;top:287.11px;font-size:14.3px;color:#000;transform:scaleX(1.1023);">Munich</span>
<span style="left:551.42px;top:307.95px;font-size:14.3px;color:#000;transform:scaleX(1.0640);">Berlin South</span>
<span style="left:551.42px;top:328.79px;font-size:14.3px;color:#000;transform:scaleX(1.0640);">Berlin South</span>
<span style="left:551.42px;top:389.62px;font-size:14.3px;color:#000;transform:scaleX(1.0640);">Berlin South</span>
<span style="left:551.42px;top:410.46px;font-size:14.3px;color:#000;transform:scaleX(1.0640);">Berlin South</span>
<span style="left:551.42px;top:471.29px;font-size:14.3px;color:#000;transform:scaleX(1.0640);">Berlin South</span>
<span style="left:551.42px;top:492.13px;font-size:14.3px;color:#000;transform:scaleX(1.0640);">Berlin South</span>
<span style="left:551.42px;top:552.96px;font-size:14.3px;color:#000;transform:scaleX(1.0640);">Berlin South</span>
<span style="left:653.24px;top:287.11px;font-size:14.3px;color:#000;transform:scaleX(1.0475);">MI-48</span>
<span style="left:653.21px;top:328.79px;font-size:14.3px;color:#000;transform:scaleX(1.0729);">MI-5</span>
<span style="left:653.21px;top:410.46px;font-size:14.3px;color:#000;transform:scaleX(1.0729);">MI-6</span>
<span style="left:653.20px;top:492.13px;font-size:14.3px;color:#000;transform:scaleX(1.0830);">MI-7</span>
<span style="left:867.80px;top:307.95px;font-size:14.3px;color:#000;transform:scaleX(0.9935);">7676767</span>
<span style="left:867.80px;top:328.79px;font-size:14.3px;color:#000;transform:scaleX(0.9935);">7676767</span>
<span style="left:867.80px;top:389.62px;font-size:14.3px;color:#000;transform:scaleX(0.9935);">7676767</span>
<span style="left:867.80px;top:410.46px;font-size:14.3px;color:#000;transform:scaleX(0.9935);">7676767</span>
<span style="left:867.80px;top:471.29px;font-size:14.3px;color:#000;transform:scaleX(0.9935);">7676767</span>
<span style="left:867.80px;top:492.13px;font-size:14.3px;color:#000;transform:scaleX(0.9935);">7676767</span>
<span style="left:867.80px;top:552.96px;font-size:14.3px;color:#000;transform:scaleX(0.9935);">7676767</span>
<span style="left:1012.06px;top:287.11px;font-size:14.3px;color:#000;transform:scaleX(1.0482);">20/03/2017 08:30</span>
<span style="left:1012.06px;top:307.95px;font-size:14.3px;color:#000;transform:scaleX(1.0482);">20/03/2017 08:30</span>
<span style="left:1012.06px;top:328.79px;font-size:14.3px;color:#000;transform:scaleX(1.0482);">20/03/2017 08:30</span>
<span style="left:1012.06px;top:389.62px;font-size:14.3px;color:#000;transform:scaleX(1.0482);">20/03/2017 08:30</span>
<span style="left:1012.06px;top:410.46px;font-size:14.3px;color:#000;transform:scaleX(1.0482);">21/03/2017 08:30</span>
<span style="left:1012.06px;top:471.29px;font-size:14.3px;color:#000;transform:scaleX(1.0482);">20/03/2017 08:30</span>
<span style="left:1012.06px;top:492.13px;font-size:14.3px;color:#000;transform:scaleX(1.0482);">22/03/2017 08:30</span>
<span style="left:1012.06px;top:552.96px;font-size:14.3px;color:#000;transform:scaleX(1.0482);">20/03/2017 08:30</span>
<span style="left:1145.26px;top:287.11px;font-size:14.3px;color:#000;transform:scaleX(1.0509);">20/03/2017 16:30</span>
<span style="left:1145.26px;top:307.95px;font-size:14.3px;color:#000;transform:scaleX(1.0509);">23/03/2017 16:30</span>
<span style="left:1145.26px;top:328.79px;font-size:14.3px;color:#000;transform:scaleX(1.0509);">20/03/2017 16:30</span>
<span style="left:1145.26px;top:389.62px;font-size:14.3px;color:#000;transform:scaleX(1.0509);">23/03/2017 16:30</span>
<span style="left:1145.26px;top:410.46px;font-size:14.3px;color:#000;transform:scaleX(1.0509);">21/03/2017 16:30</span>
<span style="left:1145.26px;top:471.29px;font-size:14.3px;color:#000;transform:scaleX(1.0509);">23/03/2017 16:30</span>
<span style="left:1145.26px;top:492.13px;font-size:14.3px;color:#000;transform:scaleX(1.0509);">22/03/2017 16:30</span>
<span style="left:1145.26px;top:552.96px;font-size:14.3px;color:#000;transform:scaleX(1.0509);">23/03/2017 16:30</span>
<span style="left:1268.45px;top:287.11px;font-size:14.3px;color:#000;transform:scaleX(1.0739);">À continuer (machine à l'arrêt)</span>
<span style="left:1268.68px;top:328.79px;font-size:14.3px;color:#000;transform:scaleX(1.0740);">Terminé</span>
<span style="left:1268.68px;top:410.46px;font-size:14.3px;color:#000;transform:scaleX(1.0740);">Terminé</span>
<span style="left:1268.69px;top:492.13px;font-size:14.3px;color:#000;transform:scaleX(1.0485);">Technicien sur machine</span>
</div></body></html>
